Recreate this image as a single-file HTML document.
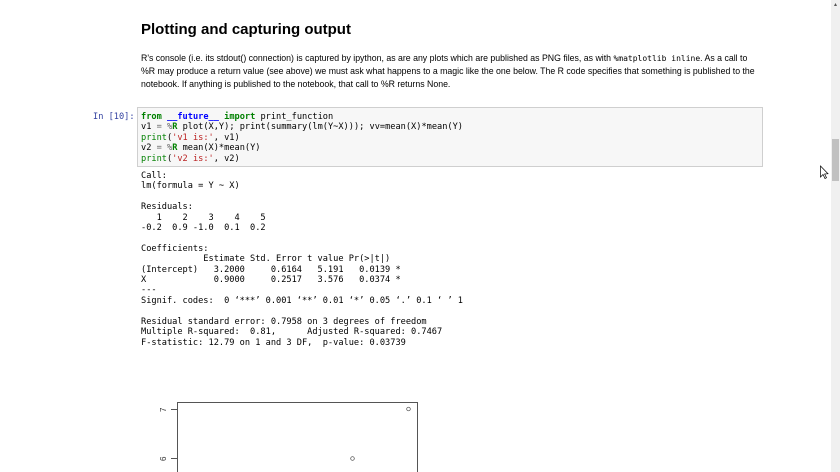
<!DOCTYPE html>
<html><head><style>
body{margin:0;width:840px;height:472px;overflow:hidden;background:#fff;position:relative;font-family:"Liberation Sans",sans-serif;}
.m{font-family:"DejaVu Sans Mono","Liberation Mono",monospace;font-size:8.65px;position:absolute;white-space:pre;color:#000;line-height:10.4px;}
h2{position:absolute;left:141px;top:21px;margin:0;font-size:15px;font-weight:bold;color:#000;}
p{position:absolute;left:141px;top:52px;width:614px;margin:0;font-size:8.75px;line-height:12.4px;color:#000;}
.k{color:#008000;font-weight:bold}.s{color:#ba2121}.b{color:#0000ff;font-weight:bold}
</style></head><body>
<h2>Plotting and capturing output</h2>
<p>R's console (i.e. its stdout() connection) is captured by ipython, as are any plots which are published as PNG files, as with <span style="font-family:'DejaVu Sans Mono',monospace;font-size:8px">%matplotlib inline</span>. As a call to %R may produce a return value (see above) we must ask what happens to a magic like the one below. The R code specifies that something is published to the notebook. If anything is published to the notebook, that call to %R returns None.</p>
<div class="m" style="left:93px;top:112px;color:#303f9f">In [10]:</div>
<div style="position:absolute;left:137px;top:107px;width:624px;height:58px;background:#f7f7f7;border:1px solid #cfcfcf;"></div>
<div class="m" style="left:141px;top:112px"><span class="k">from</span> <span class="b">__future__</span> <span class="k">import</span> print_function
v1 <span style="color:#666">=</span> <span style="color:#666">%</span><span class="k">R</span> plot(X,Y); print(summary(lm(Y~X))); vv=mean(X)*mean(Y)
<span class="k" style="font-weight:normal">print</span>(<span class="s">'v1 is:'</span>, v1)
v2 <span style="color:#666">=</span> <span style="color:#666">%</span><span class="k">R</span> mean(X)*mean(Y)
<span class="k" style="font-weight:normal">print</span>(<span class="s">'v2 is:'</span>, v2)</div>
<div class="m" style="left:141px;top:171px">Call:
lm(formula = Y ~ X)

Residuals:
   1    2    3    4    5 
-0.2  0.9 -1.0  0.1  0.2 

Coefficients:
            Estimate Std. Error t value Pr(>|t|)  
(Intercept)   3.2000     0.6164   5.191   0.0139 *
X             0.9000     0.2517   3.576   0.0374 *
---
Signif. codes:  0 ‘***’ 0.001 ‘**’ 0.01 ‘*’ 0.05 ‘.’ 0.1 ‘ ’ 1

Residual standard error: 0.7958 on 3 degrees of freedom
Multiple R-squared:  0.81,	Adjusted R-squared: 0.7467 
F-statistic: 12.79 on 1 and 3 DF,  p-value: 0.03739</div>
<svg style="position:absolute;left:0;top:0" width="840" height="472">
<rect x="177.5" y="402.5" width="240" height="80" fill="none" stroke="#555" stroke-width="1"/>
<line x1="171" y1="409.5" x2="177" y2="409.5" stroke="#555"/>
<line x1="171" y1="458.5" x2="177" y2="458.5" stroke="#555"/>
<text x="0" y="0" font-size="8" font-family="Liberation Sans" fill="#333" transform="translate(166,412) rotate(-90)">7</text>
<text x="0" y="0" font-size="8" font-family="Liberation Sans" fill="#333" transform="translate(166,461) rotate(-90)">6</text>
<circle cx="408.5" cy="409" r="1.8" fill="none" stroke="#444" stroke-width="0.7"/>
<circle cx="352.5" cy="458.5" r="1.8" fill="none" stroke="#444" stroke-width="0.7"/>
<rect x="831" y="0" width="9" height="472" fill="#f0f0f0"/>
<rect x="832" y="139" width="7" height="42" fill="#c1c1c1"/>
<path d="M834 6 L835.5 3 L837 6 Z" fill="#555"/>
<path d="M820.5 166 L820.5 177 L823 174.5 L825 178.5 L826.5 177.7 L824.6 174 L828 173.7 Z" fill="#fff" stroke="#000" stroke-width="0.7"/>
</svg>
</body></html>
